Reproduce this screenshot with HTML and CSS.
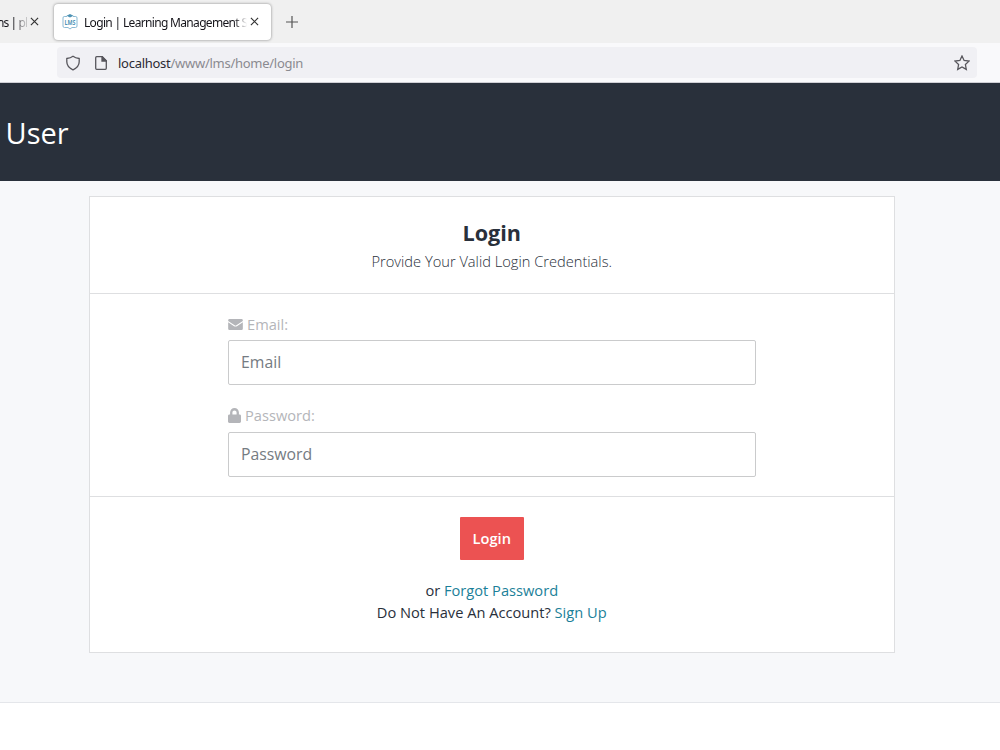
FILE: index.html
```html
<!DOCTYPE html>
<html lang="en">
<head>
    <meta charset="UTF-8">
    <title>Login | Learning Management System</title>
    <link rel="stylesheet" href="styles.css">
</head>
<body>
    <div class="tab-bar">
        <div class="tab tab-old">
            <span class="tab-title">ns | ph</span>
            <svg class="close" viewBox="0 0 10 10"><path d="M1 1l8 8M9 1l-8 8"/></svg>
        </div>
        <div class="tab tab-active">
            <svg class="favicon" viewBox="0 0 16 16">
                <path d="M5 2.5H2.2Q1 2.5 1 4v8q0 1.500 1.500 1.500H6l2 1.500 2-1.500h3.500q1.500 0 1.500-1.500V4q0-1.500-1.200-1.500H11" fill="none" stroke="#8ab9d3"/>
                <path d="M4.500 1.700L8 0l3.500 1.700L8 3.500z" fill="#4e93b5"/>
                <text x="8" y="11" text-anchor="middle" textLength="11" lengthAdjust="spacingAndGlyphs">LMS</text>
            </svg>
            <span class="tab-title">Login | Learning Management S</span>
            <svg class="close" viewBox="0 0 10 10"><path d="M1 1l8 8M9 1l-8 8"/></svg>
        </div>
        <svg class="new-tab" viewBox="0 0 12 12"><path d="M6 0v12M0 6h12"/></svg>
    </div>
    <div class="nav-bar">
        <div class="url-box">
            <svg class="shield" viewBox="0 0 16 16"><path d="M8 1.200c2 1.500 4 2 6.200 2.300v3.200c0 3.500-2.500 6.300-6.200 8.100-3.700-1.800-6.200-4.600-6.200-8.100V3.500C4 3.200 6 2.700 8 1.200z"/></svg>
            <svg class="page-icon" viewBox="0 0 12 14"><path d="M1.700.7h5.600l4 4v7.600q0 1-1 1H1.700q-1 0-1-1V1.700q0-1 1-1z"/><path class="fold" d="M7 .7V5h4.300z"/></svg>
            <span class="url">localhost<span>/www/lms/home/login</span></span>
            <svg class="star" viewBox="0 0 16 16"><path d="M8 1l2.100 4.500 4.900.6-3.600 3.400.9 4.900L8 12l-4.300 2.400.9-4.900L1 6.100l4.900-.6z"/></svg>
        </div>
    </div>

    <div class="page-header">
        <h1>User</h1>
    </div>
    <div class="content">
        <div class="card">
            <div class="card-title">
                <h2>Login</h2>
                <p>Provide Your Valid Login Credentials.</p>
            </div>
            <form class="login-form">
                <label for="email">
                    <svg class="envelope" viewBox="0 0 512 384"><path d="M48 0h416q48 0 48 48v20L286 222q-30 20-60 0L0 68V48Q0 0 48 0zM0 110l205 139q51 34 102 0l205-139v226q0 48-48 48H48q-48 0-48-48z"/></svg>
                    <span>Email:</span>
                </label>
                <input type="text" id="email" placeholder="Email">
                <label for="password">
                    <svg class="lock" viewBox="0 0 448 512"><path d="M400 224h-24v-72C376 68.200 307.800 0 224 0S72 68.200 72 152v72H48c-26.500 0-48 21.500-48 48v192c0 26.500 21.500 48 48 48h352c26.500 0 48-21.500 48-48V272c0-26.500-21.500-48-48-48zm-104 0H152v-72c0-39.700 32.300-72 72-72s72 32.300 72 72z"/></svg>
                    <span>Password:</span>
                </label>
                <input type="password" id="password" placeholder="Password">
            </form>
            <div class="card-footer">
                <button type="button">Login</button>
                <p>or <a href="#">Forgot Password</a></p>
                <p class="sign-up">Do Not Have An Account? <a href="#">Sign Up</a></p>
            </div>
        </div>
    </div>
</body>
</html>
```
FILE: styles.css
```css
*{
    box-sizing: border-box;
    margin: 0;
    padding: 0;
}
body{
    height: 750px;
    overflow: hidden;
    background: #fff;
    color: #29303b;
    font-family: "Open Sans", sans-serif;
}
svg{
    display: block;
    flex: none;
}
a{
    color: #1b7f99;
    text-decoration: none;
}

/* browser tabs */
.tab-bar{
    display: flex;
    align-items: center;
    height: 43px;
    background: #f0f0f0;
    font-family: "Noto Sans", sans-serif;
    font-size: 12px;
    color: #15141a;
}
.tab{
    display: flex;
    align-items: center;
    height: 36px;
}
.tab-title{
    flex: none;
    white-space: nowrap;
}
.tab-old{
    width: 54px;
}
.tab-old .tab-title{
    width: 30px;
    margin: 0 3px 0 -3px;
    padding-top: 1px;
    letter-spacing: -0.9px;
    -webkit-mask-image: linear-gradient(to right, #000 55%, rgba(0, 0, 0, .2) 95%);
    mask-image: linear-gradient(to right, #000 55%, rgba(0, 0, 0, .2) 95%);
}
.tab-active{
    width: 217px;
    padding-left: 8px;
    background: #fff;
    border-radius: 4px;
    box-shadow: 0 0 3px rgba(0, 0, 0, .45);
}
.tab-active .tab-title{
    width: 163px;
    margin: 0 3px 0 6px;
    padding-top: 1px;
    letter-spacing: -0.67px;
    -webkit-mask-image: linear-gradient(to right, #000 92%, transparent);
    mask-image: linear-gradient(to right, #000 92%, transparent);
}
.favicon{
    width: 16px;
    height: 16px;
}
.favicon text{
    fill: #4e93b5;
    font: bold 7.5px "Open Sans", sans-serif;
}
.close{
    width: 9px;
    height: 9px;
    fill: none;
    stroke: #333;
    stroke-width: 1.3;
}
.new-tab{
    width: 12px;
    height: 12px;
    margin-left: 15px;
    fill: none;
    stroke: #555;
    stroke-width: 1.2;
}

/* address bar */
.nav-bar{
    height: 40px;
    padding: 4px 23px 5px 57px;
    background: #f9f9fb;
    border-bottom: 1px solid #cfcfd5;
}
.url-box{
    display: flex;
    align-items: center;
    height: 31px;
    padding: 0 7px 0 8px;
    background: #f0f0f4;
    border-radius: 4px;
}
.url-box svg{
    fill: none;
    stroke: #57565c;
    stroke-width: 1.3;
}
.shield, .star{
    width: 16px;
    height: 16px;
}
.page-icon{
    width: 12px;
    height: 14px;
    margin: 0 11px 0 14px;
}
.page-icon .fold{
    fill: #57565c;
}
.url{
    flex: 1;
    padding-top: 1px;
    font-family: "Noto Sans", sans-serif;
    font-size: 13px;
    letter-spacing: -0.27px;
    color: #2b2a33;
}
.url span{
    color: #8a8a90;
}

/* page */
.page-header{
    height: 98px;
    padding: 29px 5.5px 0;
    background: #29303b;
}
.page-header h1{
    color: #fff;
    font-size: 29px;
    font-weight: 400;
    line-height: 42px;
}
.content{
    height: 522px;
    padding: 15px 105.5px 0 89px;
    background: #f7f8fa;
    border-bottom: 1px solid #e4e6ea;
}
.card{
    height: 457px;
    background: #fff;
    border: 1px solid #dedfe1;
}
.card-title{
    height: 97px;
    padding-top: 20px;
    border-bottom: 1px solid #dedfe1;
    text-align: center;
}
.card-title h2{
    font-size: 21.6px;
    font-weight: 700;
    line-height: 31px;
}
.card-title p{
    font-size: 14.65px;
    font-weight: 300;
    line-height: 26px;
}
.login-form{
    height: 203px;
    padding: 20px 138px 0;
    border-bottom: 1px solid #dedfe1;
}
.login-form label{
    display: flex;
    align-items: center;
    height: 20px;
    margin-bottom: 6px;
    color: #b4b5b9;
    font-size: 14.65px;
}
.login-form label svg{
    margin-right: 4px;
    fill: #b4b5b9;
}
.envelope{
    width: 15px;
    height: 11px;
}
.lock{
    width: 13px;
    height: 15px;
}
.login-form input{
    display: block;
    width: 100%;
    height: 45px;
    margin-bottom: 20px;
    padding: 0 12px 1px;
    border: 1px solid #cacbcc;
    border-radius: 2px;
    font-family: inherit;
    font-size: 15.8px;
}
.login-form label + input:last-child{
    margin-top: 7px;
}
.login-form input::placeholder{
    color: #757b82;
}
.card-footer{
    padding-top: 20px;
    text-align: center;
    font-size: 14.65px;
    line-height: 22.5px;
}
.card-footer button{
    display: block;
    width: 64px;
    height: 43px;
    margin: 0 auto 18.5px;
    padding-bottom: 1px;
    background: #ec5252;
    border: none;
    border-radius: 1px;
    color: #fff;
    font-family: inherit;
    font-size: 14.65px;
    font-weight: 600;
}
```
